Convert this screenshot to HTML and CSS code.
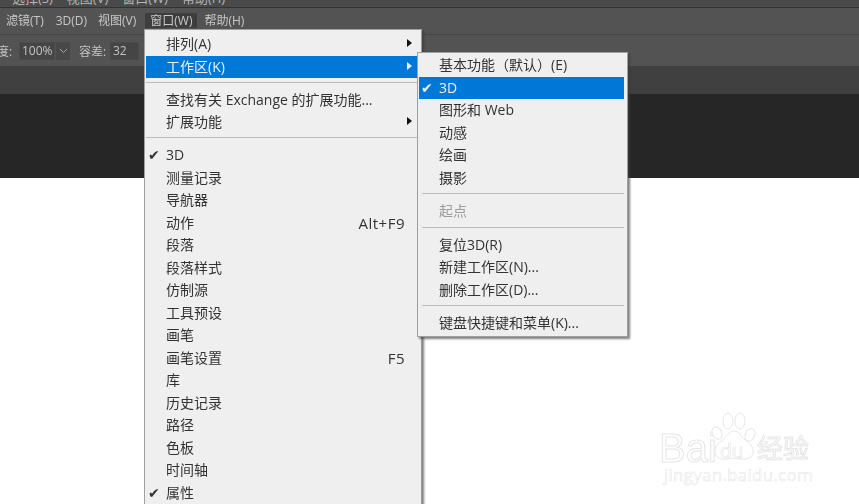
FILE: index.html
```html
<!DOCTYPE html>
<html lang="zh-CN">
<head>
<meta charset="utf-8">
<title>窗口菜单</title>
<link rel="stylesheet" href="styles.css">
</head>
<body>
<div class="app">
  <div class="titlebar"><div class="titletext"><span>选择(S)</span><span>视图(V)</span><span>窗口(W)</span><span>帮助(H)</span></div></div>
  <div class="menubar">
    <span class="mi">滤镜(T)</span><span class="mi">3D(D)</span><span class="mi">视图(V)</span><span class="mi active">窗口(W)</span><span class="mi">帮助(H)</span>
  </div>
  <div class="options">
    <span class="lbl">度:</span>
    <span class="field pct">100%</span>
    <span class="drop"><svg width="9" height="6" viewBox="0 0 9 6"><path d="M1 1l3.5 3.5L8 1" fill="none" stroke="#a8a8a8" stroke-width="1"/></svg></span>
    <span class="lbl tol">容差:</span>
    <span class="field num">32</span>
  </div>
  <div class="tabs"></div>
  <div class="dark"></div>
  <div class="canvas"></div>
</div>

<div class="menu main">
  <div class="row"><span class="t">排列(A)</span><i class="arr"></i></div>
  <div class="row hi"><span class="t">工作区(K)</span><i class="arr"></i></div>
  <div class="sep"></div>
  <div class="row"><span class="t">查找有关 Exchange 的扩展功能...</span></div>
  <div class="row"><span class="t">扩展功能</span><i class="arr"></i></div>
  <div class="sep"></div>
  <div class="row"><b class="chk">✔</b><span class="t">3D</span></div>
  <div class="row"><span class="t">测量记录</span></div>
  <div class="row"><span class="t">导航器</span></div>
  <div class="row"><span class="t">动作</span><span class="key">Alt+F9</span></div>
  <div class="row"><span class="t">段落</span></div>
  <div class="row"><span class="t">段落样式</span></div>
  <div class="row"><span class="t">仿制源</span></div>
  <div class="row"><span class="t">工具预设</span></div>
  <div class="row"><span class="t">画笔</span></div>
  <div class="row"><span class="t">画笔设置</span><span class="key">F5</span></div>
  <div class="row"><span class="t">库</span></div>
  <div class="row"><span class="t">历史记录</span></div>
  <div class="row"><span class="t">路径</span></div>
  <div class="row"><span class="t">色板</span></div>
  <div class="row"><span class="t">时间轴</span></div>
  <div class="row"><b class="chk">✔</b><span class="t">属性</span></div>
</div>

<div class="menu sub">
  <div class="row"><span class="t">基本功能（默认）(E)</span></div>
  <div class="row hi"><b class="chk">✔</b><span class="t">3D</span></div>
  <div class="row"><span class="t">图形和 Web</span></div>
  <div class="row"><span class="t">动感</span></div>
  <div class="row"><span class="t">绘画</span></div>
  <div class="row"><span class="t">摄影</span></div>
  <div class="sep"></div>
  <div class="row off"><span class="t">起点</span></div>
  <div class="sep"></div>
  <div class="row"><span class="t">复位3D(R)</span></div>
  <div class="row"><span class="t">新建工作区(N)...</span></div>
  <div class="row"><span class="t">删除工作区(D)...</span></div>
  <div class="sep"></div>
  <div class="row"><span class="t">键盘快捷键和菜单(K)...</span></div>
</div>

<div class="mark">
  <span class="wm-bai">Bai</span>
  <svg class="paw" width="46" height="50" viewBox="0 0 46 50">
    <g fill="#fff" stroke="#e6e6e6" stroke-width="1">
      <ellipse cx="6" cy="22" rx="4.6" ry="6.5" transform="rotate(-25 6 22)"/>
      <ellipse cx="17" cy="10" rx="5" ry="8"/>
      <ellipse cx="29" cy="10" rx="5" ry="8"/>
      <ellipse cx="39" cy="24" rx="4.8" ry="6.5" transform="rotate(25 39 24)"/>
      <path d="M23 20c-5 0-7 5-11 9-5 3-9 7-8 13 1 5 6 7 12 6 5-1 9-1 14 0 6 1 11-1 12-6 1-6-3-10-8-13-4-4-6-9-11-9z"/>
    </g>
  </svg>
  <span class="wm-du">du</span>
  <span class="wm-jy">经验</span>
  <span class="wm-url">jingyan.baidu.com</span>
</div>
</body>
</html>
```

FILE: styles.css
```css
* { box-sizing: border-box; }
html, body { margin: 0; padding: 0; background: #fff; }
body {
  width: 859px;
  height: 504px;
  overflow: hidden;
  position: relative;
  font-family: "Open Sans", "Noto Sans CJK SC", sans-serif;
}
.app { display: flex; flex-direction: column; height: 504px; filter: blur(0.45px); }

.titlebar { height: 8px; background: #4a4a4a; border-bottom: 1px solid #333; overflow: hidden; flex: none; }
.titletext { display: flex; margin-top: -11px; padding-left: 12px; gap: 14px; font-size: 13px; line-height: 18px; color: #b4b4b4; }

.menubar { height: 26px; background: #535353; display: flex; align-items: center; padding: 0 0 2px 1px; flex: none; }
.mi { font-size: 12px; color: #c8c8c8; padding: 0 5px; line-height: 15px; margin-right: 1px; height: 15px; display: flex; align-items: center; }
.mi:nth-child(2) { margin-left: 1px; }
.mi.active { background: #3e3e3e; margin-left: 3px; margin-right: 2px; }

.options { height: 32px; background: #535353; border-top: 1px solid #474747; display: flex; align-items: center; font-size: 12px; color: #c4c4c4; flex: none; }
.lbl { margin-left: -3px; width: 22px; }
.tol { margin-left: 9px; width: 31px; }
.field { height: 18px; background: #454545; border: 1px solid #4a4a4a; display: flex; align-items: center; padding-left: 2px; }
.pct { width: 36px; }
.drop { width: 14px; height: 18px; margin-left: 1px; background: #484848; display: flex; align-items: center; justify-content: center; }
.num { width: 29px; }

.tabs { height: 28px; background: #404040; flex: none; }
.dark { height: 84px; background: #262626; flex: none; }
.canvas { flex: 1; background: #fff; }

.menu {
  position: absolute;
  background: #efefef;
  border: 1px solid #a0a0a0;
  box-shadow: 2px 2px 2px rgba(60,60,60,.65);
  font-size: 14px;
  color: #333;
  filter: blur(0.3px);
}
.main { left: 144px; top: 29px; width: 278px; height: 490px; padding: 3px 1px; border-right-color: #999; }
.sub { left: 417px; top: 52px; width: 211px; height: 285px; padding: 1px 3px 0 1px; }
.row { height: 22.5px; display: flex; align-items: center; position: relative; padding-left: 20px; line-height: 22px; white-space: nowrap; }
.hi { background: #0078d7; color: #e8f2fb; }
.off { color: #9c9c9c; }
.chk { position: absolute; left: 2px; font-size: 14px; font-weight: bold; font-family: "DejaVu Sans", sans-serif; }
.key { position: absolute; right: 15px; top: 0; font-size: 15px; letter-spacing: .5px; }
.arr { position: absolute; right: 8px; top: 6px; width: 0; height: 0; border-left: 5px solid #111; border-top: 4px solid transparent; border-bottom: 4px solid transparent; }
.hi .arr { border-left-color: #e8f2fb; }
.sep { height: 1px; background: #bcbcbc; }
.main .sep { margin: 3.5px 0 6px; }
.sub .sep { margin: 4px 0 6px 3px; }

.mark { position: absolute; left: 655px; top: 405px; width: 190px; height: 85px; }
.mark span { position: absolute; color: #fff; -webkit-text-stroke: 1px #e6e6e6; white-space: nowrap; }
.wm-bai { left: 4px; top: 26px; font-size: 40px; line-height: 34px; font-family: "Liberation Sans", sans-serif; }
.paw { position: absolute; left: 56px; top: 6px; }
.mark .wm-du { left: 65px; top: 36px; font-size: 21px; line-height: 20px; font-family: "Liberation Sans", sans-serif; -webkit-text-stroke: .7px #e6e6e6; }
.mark .wm-jy { left: 102px; top: 26px; font-size: 26px; line-height: 32px; font-family: "Noto Sans CJK SC", sans-serif; }
.mark .wm-url { left: 9px; top: 62px; font-size: 17px; line-height: 16px; letter-spacing: .25px; font-family: "Open Sans", sans-serif; -webkit-text-stroke: .6px #e8e8e8; }
```
